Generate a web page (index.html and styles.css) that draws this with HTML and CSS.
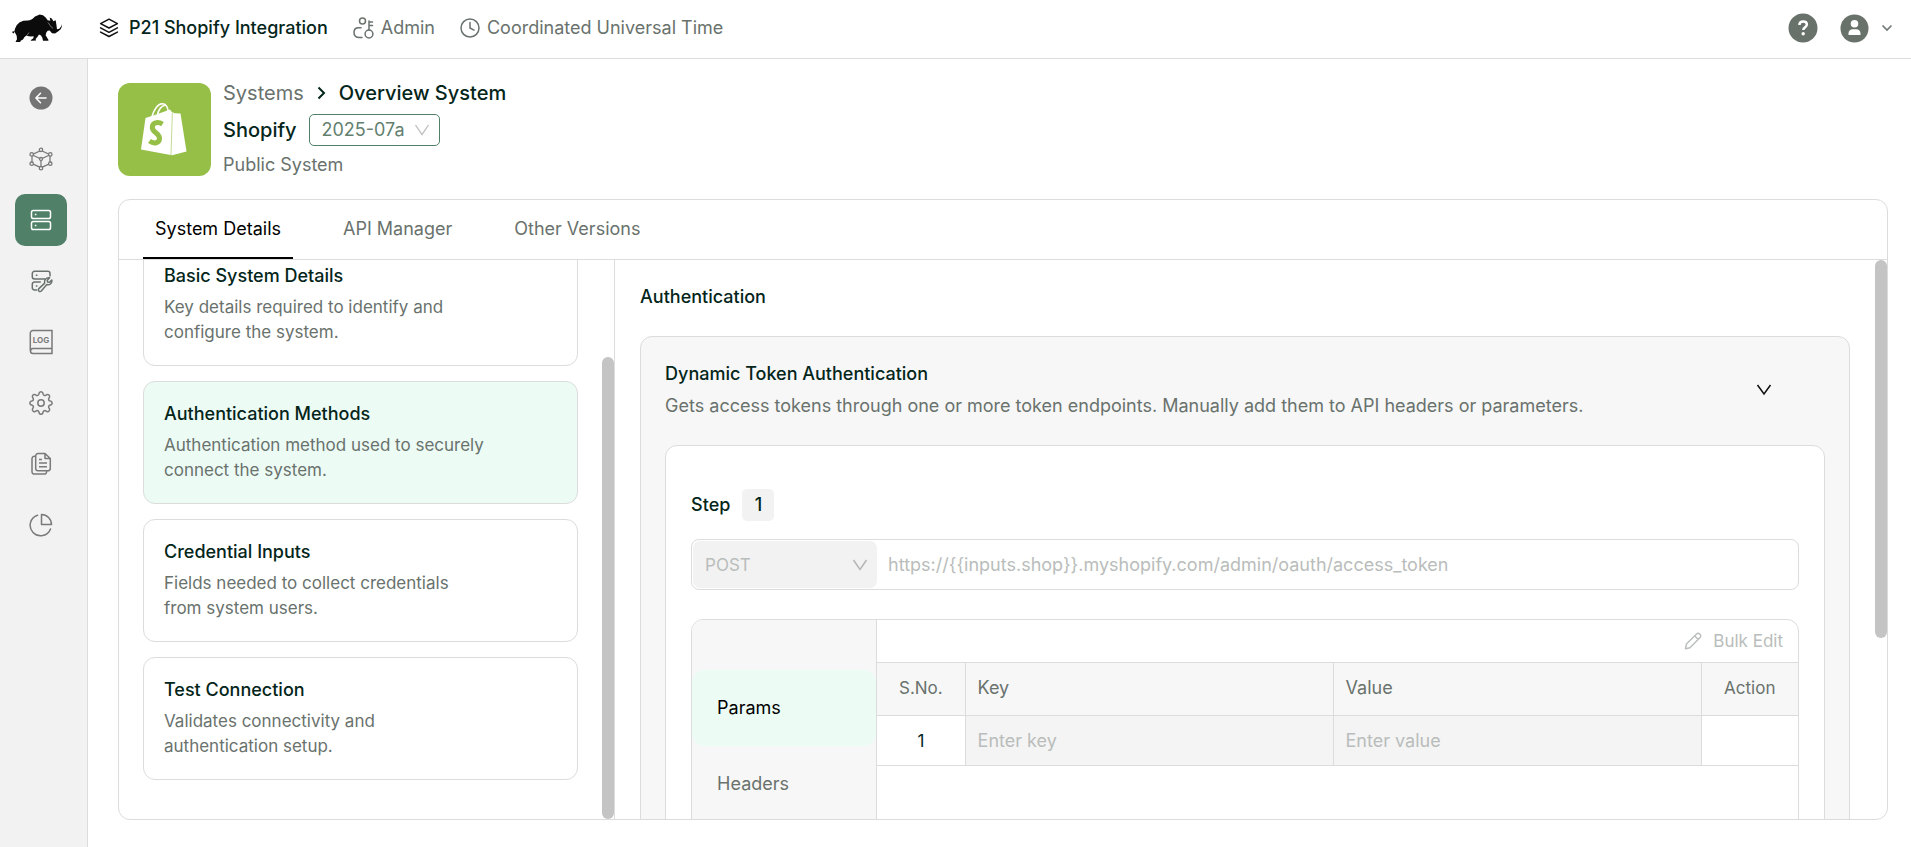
FILE: index.html
```html
<!DOCTYPE html>
<html lang="en">
<head>
<meta charset="utf-8">
<meta name="viewport" content="width=device-width, initial-scale=1">
<title>Overview System</title>
<link rel="stylesheet" href="styles.css">
</head>
<body class="app">
<header class="topbar">
  <a class="brand" href="#" aria-label="Home">
    <svg width="50" height="28" viewBox="37 43 150 83"><path fill="#0b0b0b" d="M39 94l5 1 2-8 5-11 8-8 12-5 14-1 12-4 9-8 9-4 5-2 10 2 8 7 6 8 8 2-2-10 7 4 4 7 7-3 2 12 2 15 7-1 7-9 1-6 2-2-2 9-4 9-8 7-9 6-9-1-7-8-6 1-4 5-2 8 4 7 5 8-2 2h-15l-2-9-4-7-6-3-6 9-4 4 1 5-14 1-2-2 8-6 1-6-9 1-14-2-5 4-4 7-7 4-2 5H49l-1-3 4-7-1-10-4-8-2-4-3 5-4-2z"/><path d="M78 112l10-14M104 50l-16 12M145 68l10 14 5 3" stroke="#fff" stroke-width="1.3" fill="none"/></svg>
  </a>
  <div class="context">
    <span class="ctx ctx-main">
      <svg width="20" height="20" viewBox="0 0 20 20" fill="none" stroke="#111" stroke-width="1.5" stroke-linejoin="round" stroke-linecap="round"><path d="M10 1.2L18.4 5.6 10 10 1.6 5.6zM1.6 9.9L10 14.3l8.4-4.4M1.6 14.1L10 18.5l8.4-4.4"/></svg>
      P21 Shopify Integration</span>
    <span class="ctx">
      <svg width="21" height="22" viewBox="0 0 21 22" fill="none" stroke="#69726d" stroke-width="1.5" stroke-linecap="round"><circle cx="9.5" cy="4" r="3"/><path d="M8 10.7H5.6C2.8 10.7 1 12.700 1 15.400c0 3 2 5 5.500 5.200H9M16 13V4M16 5h3.500M16 8.600h3.500"/><circle cx="16" cy="17" r="3.900"/></svg>
      Admin</span>
    <span class="ctx">
      <svg width="20" height="20" viewBox="0 0 20 20" fill="none" stroke="#69726d" stroke-width="1.5" stroke-linecap="round"><circle cx="10" cy="10" r="9"/><path d="M10 4.500V10l4 2.200"/></svg>
      Coordinated Universal Time</span>
  </div>
  <div class="account">
    <button class="icon-btn" aria-label="Help"><svg width="30" height="30" viewBox="0 0 30 30"><circle cx="15" cy="15" r="14.500" fill="#69726a"/><path d="M11.400 12c0-2.200 1.600-3.500 3.800-3.500s3.700 1.200 3.700 3.100c0 2.600-3.600 2.700-3.600 5.400" fill="none" stroke="#fff" stroke-width="2.500"/><circle cx="15.200" cy="20.700" r="1.700" fill="#fff"/></svg></button>
    <button class="icon-btn user" aria-label="Account"><svg width="29" height="29" viewBox="0 0 29 29"><circle cx="14.500" cy="14.500" r="14" fill="#69726a"/><circle cx="14.500" cy="9.800" r="3.800" fill="#fff"/><path d="M8.500 21v-1.500c0-2.500 1.700-4.300 4.200-4.300h3.600c2.500 0 4.200 1.800 4.200 4.300V21z" fill="#fff"/></svg><svg width="12" height="8" viewBox="0 0 12 8"><path d="M1.500 1.500L6 6l4.500-4.500" fill="none" stroke="#737b76" stroke-width="1.700"/></svg></button>
  </div>
</header>

<div class="shell">
  <nav class="rail" aria-label="Main">
    <a class="rail-link" href="#" aria-label="Back"><svg width="24" height="24" viewBox="0 0 24 24"><circle cx="12" cy="12" r="11.500" fill="#747474"/><path d="M17 12H7.500M11.500 7.300L6.900 12l4.600 4.700" fill="none" stroke="#fff" stroke-width="1.500" stroke-linecap="round" stroke-linejoin="round"/></svg></a>
    <a class="rail-link" href="#" aria-label="Integrations"><svg width="24" height="24" viewBox="0 0 24 24" fill="none" stroke="#7a7a7a" stroke-width="1.300"><path d="M12 3.500l9 4.100v9L12 20.700l-9-4.100v-9zM3.500 8l8.500 4 8.500-4M12 12v8"/><g fill="#f2f2f2"><circle cx="12" cy="2.800" r="1.700"/><circle cx="2.700" cy="7.400" r="1.700"/><circle cx="21.300" cy="7.400" r="1.700"/><circle cx="2.700" cy="16.700" r="1.700"/><circle cx="21.300" cy="16.700" r="1.700"/><circle cx="12" cy="21.200" r="1.700"/><circle cx="12" cy="12" r="1.500"/></g></svg></a>
    <a class="rail-link active" href="#" aria-label="Systems"><svg width="22" height="22" viewBox="0 0 22 22" fill="none" stroke="#fff" stroke-width="1.500"><rect x="1.500" y="1.500" width="19" height="8" rx="1.800"/><rect x="1.500" y="12.500" width="19" height="8" rx="1.800"/><path d="M4.800 5.500h1.600M4.800 16.500h1.600"/></svg></a>
    <a class="rail-link" href="#" aria-label="System tools"><svg width="24" height="24" viewBox="0 0 24 24" fill="none" stroke="#69726d" stroke-width="1.500" stroke-linejoin="round"><path d="M16 10H5.500A2.200 2.200 0 0 1 3.300 7.800V4.500A2.200 2.200 0 0 1 5.500 2.300h13.300A2.200 2.200 0 0 1 21 4.500v3M11.800 13H5.500a2.200 2.200 0 0 0-2.200 2.200v3.500A2.200 2.200 0 0 0 5.500 21H8M6.800 6.200h1.600M6.800 17h1.600"/><path d="M20.500 8.800l-2.300 2.600.4 1.700 1.800.2 2.400-2.300c.5 3-1.900 5.300-5 4.600L12.300 22c-1.900 1.600-3.900-.6-2.400-2.400l5.800-5.500c-.8-3.300 1.800-6 4.800-5.300z"/></svg></a>
    <a class="rail-link" href="#" aria-label="Logs"><svg width="24" height="26" viewBox="0 0 24 26" fill="none" stroke="#7a7a7a" stroke-width="1.500"><path d="M23 19.500H4a2.500 2.500 0 0 0 0 5h19zM23 19.500v-18H4A2.600 2.600 0 0 0 1.300 4v18"/><text x="12" y="13.500" class="log-text">LOG</text></svg></a>
    <a class="rail-link" href="#" aria-label="Settings"><svg width="24" height="24" viewBox="0 0 24 24" fill="none" stroke="#7a7a7a" stroke-width="1.500" stroke-linejoin="round"><circle cx="12" cy="12" r="3.200"/><path d="M10.200 1.900a2 2 0 0 1 3.600 0l.4 1.400c.4 1.100 1.600 1.500 2.500 1l1.200-.7a2 2 0 0 1 2.600 2.600l-.7 1.200c-.5.900 0 2.200 1 2.500l1.300.4a2 2 0 0 1 0 3.500l-1.300.4c-1 .3-1.500 1.500-1 2.500l.7 1.200a2 2 0 0 1-2.600 2.600l-1.200-.7c-.9-.5-2.100-.1-2.500 1l-.4 1.300a2 2 0 0 1-3.600 0l-.4-1.300c-.4-1.100-1.600-1.500-2.500-1l-1.200.7a2 2 0 0 1-2.600-2.600l.7-1.200c.5-1 0-2.200-1-2.500l-1.300-.4a2 2 0 0 1 0-3.500l1.300-.4c1-.3 1.500-1.600 1-2.500l-.7-1.200a2 2 0 0 1 2.600-2.600l1.200.7c.9.500 2.100.1 2.500-1z"/></svg></a>
    <a class="rail-link" href="#" aria-label="Documents"><svg width="24" height="24" viewBox="0 0 24 24" fill="none" stroke="#7a7a7a" stroke-width="1.500" stroke-linejoin="round"><path d="M16 1.500H9A2.300 2.300 0 0 0 6.700 3.800v12.700a2.300 2.300 0 0 0 2.300 2.300h10a2.300 2.300 0 0 0 2.300-2.300v-10zM16 1.500v5h5.300M6.700 4.300H5.300A2.300 2.300 0 0 0 3 6.600v13.200a2.300 2.300 0 0 0 2.300 2.300h10a2.300 2.300 0 0 0 2.300-2.300v-1M10 7.500h3M10 11h8M10 14.700h8"/></svg></a>
    <a class="rail-link" href="#" aria-label="Reports"><svg width="24" height="24" viewBox="0 0 24 24" fill="none" stroke="#7a7a7a" stroke-width="1.500" stroke-linejoin="round" stroke-linecap="round"><path d="M12.500 1.500v10h10c0-5.500-4.500-10-10-10z"/><path d="M8.500 2.300A10.500 10.500 0 1 0 21.500 16"/></svg></a>
  </nav>

  <main class="page">
    <section class="system-head">
      <svg class="system-logo" width="93" height="93" viewBox="0 0 93 93"><rect width="93" height="93" rx="12" fill="#96bf48"/><path d="M27.500 35l10-3.200 14.500-5.300 2 2.800 3 1 5.500.2 6 38-14.500 3.800L23 66.500z" fill="#fff"/><path d="M34 33.500C36 26 40 21 44 20.800s6 4 6.500 9M39.500 31.500c1-5 4.500-9.500 7.500-9" fill="none" stroke="#fff" stroke-width="1.600"/><path d="M54.300 30L53 72" stroke="#b4d27c" stroke-width=".8"/><path d="M44.500 41.200c-5-3.200-10.200-1.200-10.200 3.300 0 5 7.200 5.500 7.200 10.800 0 5-5.500 6-10 2.700" fill="none" stroke="#96bf48" stroke-width="5"/></svg>
      <div class="system-info">
        <nav class="crumbs" aria-label="Breadcrumb"><a href="#">Systems</a><svg width="9" height="14" viewBox="0 0 9 14"><path d="M1.500 1.500L7 7l-5.500 5.500" fill="none" stroke="#04251a" stroke-width="2"/></svg><h1>Overview System</h1></nav>
        <div class="name-row"><label for="version">Shopify</label>
          <span class="select version"><select id="version"><option>2025-07a</option></select><svg width="16" height="12" viewBox="0 0 16 12"><path d="M1.500 1L8 10.500 14.500 1" fill="none" stroke="#bcbcbc" stroke-width="1.300"/></svg></span></div>
        <p class="kind">Public System</p>
      </div>
    </section>

    <section class="panel">
      <div class="tabs" role="tablist">
        <button class="tab selected" role="tab" aria-selected="true">System Details</button>
        <button class="tab" role="tab">API Manager</button>
        <button class="tab" role="tab">Other Versions</button>
      </div>
      <div class="panes">
        <div class="pane steps-pane">
          <div class="cards">
            <a class="card" href="#"><h2>Basic System Details</h2><p>Key details required to identify and configure the system.</p></a>
            <a class="card current" href="#"><h2>Authentication Methods</h2><p>Authentication method used to securely connect the system.</p></a>
            <a class="card" href="#"><h2>Credential Inputs</h2><p>Fields needed to collect credentials from system users.</p></a>
            <a class="card" href="#"><h2>Test Connection</h2><p>Validates connectivity and authentication setup.</p></a>
          </div>
          <div class="track track-end"><div class="thumb" style="height:82.6%"></div></div>
        </div>
        <div class="pane detail-pane">
          <div class="detail">
            <h2 class="detail-title">Authentication</h2>
            <div class="method">
              <div class="method-head">
                <div><h3>Dynamic Token Authentication</h3><p>Gets access tokens through one or more token endpoints. Manually add them to API headers or parameters.</p></div>
                <button class="icon-btn" aria-label="Collapse"><svg width="16" height="12" viewBox="0 0 16 12"><path d="M1.500 1L8 10 14.500 1" fill="none" stroke="#111" stroke-width="1.500"/></svg></button>
              </div>
              <div class="step">
                <div class="step-title">Step <span class="badge">1</span></div>
                <div class="endpoint">
                  <span class="select verb"><select aria-label="Method" disabled><option>POST</option></select><svg width="16" height="12" viewBox="0 0 16 12"><path d="M1.500 1L8 10.500 14.500 1" fill="none" stroke="#b5b5b5" stroke-width="1.500"/></svg></span>
                  <input class="url" aria-label="URL" disabled value="https://{{inputs.shop}}.myshopify.com/admin/oauth/access_token">
                </div>
                <div class="request">
                  <div class="side-tabs" role="tablist">
                    <button class="side-tab selected" role="tab" aria-selected="true">Params</button>
                    <button class="side-tab" role="tab">Headers</button>
                  </div>
                  <div class="grid-area">
                    <div class="toolbar"><button class="bulk" disabled><svg width="18" height="18" viewBox="0 0 18 18" fill="none" stroke="#b9bdbb" stroke-width="1.400" stroke-linejoin="round"><path d="M1.500 16.700l.9-4.600L12.600 1.900a2.100 2.100 0 0 1 3 0l.5.500a2.100 2.100 0 0 1 0 3L5.900 15.700zM10.700 3.900l3.400 3.400"/></svg>Bulk Edit</button></div>
                    <table>
                      <colgroup><col class="c-no"><col><col><col class="c-act"></colgroup>
                      <thead><tr><th class="mid">S.No.</th><th>Key</th><th>Value</th><th class="mid">Action</th></tr></thead>
                      <tbody><tr><td class="mid">1</td><td class="field"><input aria-label="Key" placeholder="Enter key" disabled></td><td class="field"><input aria-label="Value" placeholder="Enter value" disabled></td><td></td></tr></tbody>
                    </table>
                  </div>
                </div>
              </div>
            </div>
          </div>
          <div class="track"><div class="thumb" style="height:67.6%"></div></div>
        </div>
      </div>
    </section>
  </main>
</div>
</body>
</html>
```

FILE: styles.css
```css
:root {
  --ink: #04251a;
  --muted: #69726d;
  --faint: #b9bdbb;
  --line: #dcdcdc;
  --mint: #edfbf5;
  --green: #518068;
}
* { box-sizing: border-box; }
h1, h2, h3, p { margin: 0; font-weight: 400; font-size: inherit; }
button, input, select { font: inherit; color: inherit; border: 0; background: none; padding: 0; margin: 0; }
a { color: inherit; text-decoration: none; }
svg { display: block; flex: none; }

.app {
  margin: 0;
  height: 100vh;
  display: flex;
  flex-direction: column;
  overflow: hidden;
  background: #fff;
  color: var(--ink);
  font: 18px/26px Inter, "Open Sans", sans-serif;
}

.topbar {
  display: flex;
  align-items: center;
  flex: none;
  height: 59px;
  padding: 0 18px 2px 12px;
  border-bottom: 1px solid var(--line);
}
.brand { width: 87px; }
.context { display: flex; gap: 25px; color: var(--muted); }
.ctx { display: flex; align-items: center; gap: 7px; }
.ctx-main { gap: 10px; font-weight: 500; color: var(--ink); }
.account { display: flex; align-items: center; gap: 22px; margin-left: auto; }
.icon-btn { display: flex; align-items: center; gap: 12px; }

.shell { display: flex; flex: 1; min-height: 0; }
.rail {
  flex: none;
  width: 88px;
  display: flex;
  flex-direction: column;
  gap: 9px;
  padding: 13px 20px 0 15px;
  background: #f2f2f2;
  border-right: 1px solid var(--line);
}
.rail-link { width: 52px; height: 52px; display: grid; place-items: center; border-radius: 10px; }
.rail-link.active { background: var(--green); }
.log-text { font: 700 8px Inter, sans-serif; text-anchor: middle; fill: #7a7a7a; stroke: none; }

.page { flex: 1; min-width: 0; display: flex; flex-direction: column; padding: 21px 23px 27px 30px; }
.system-head { display: flex; align-items: center; gap: 12px; margin-bottom: 21px; }
.crumbs { display: flex; align-items: center; gap: 13px; font-size: 20px; font-weight: 500; }
.crumbs a { color: var(--muted); font-weight: 400; }
.crumbs h1 { font-weight: 500; }
.name-row { display: flex; align-items: center; gap: 12px; margin: 8px 0 6px; font-size: 20px; font-weight: 500; }
.kind { color: var(--muted); }

.select { position: relative; display: flex; align-items: center; }
.select select { appearance: none; width: 100%; height: 100%; opacity: 1; }
.select svg { position: absolute; right: 9px; pointer-events: none; }
.version { width: 131px; height: 32px; border: 1px solid var(--green); border-radius: 5px; font-size: 18px; font-weight: 400; color: #63806f; }
.version select { padding-left: 12px; }

.panel {
  flex: 1;
  min-height: 0;
  display: flex;
  flex-direction: column;
  border: 1px solid var(--line);
  border-radius: 12px;
  overflow: hidden;
}
.tabs { display: flex; gap: 38px; flex: none; height: 60px; padding-left: 24px; border-bottom: 1px solid var(--line); }
.tab { padding: 0 12px; color: var(--muted); border-bottom: 2px solid transparent; }
.tab.selected { color: #000; border-color: #000; }

.panes { flex: 1; min-height: 0; display: grid; grid-template-columns: 28.06% minmax(0, 1fr); }
.pane { display: flex; min-height: 0; overflow: hidden; }
.steps-pane { border-right: 1px solid var(--line); }
.track { flex: none; width: 12px; display: flex; flex-direction: column; }
.track-end { justify-content: flex-end; }
.thumb { background: #c4c4c4; border-radius: 6px; }

.cards { flex: 1; display: flex; flex-direction: column; justify-content: flex-end; gap: 15px; padding: 0 24px 39px; }
.card { flex: none; padding: 19px 20px 20px; border: 1px solid var(--line); border-radius: 12px; }
.card.current { background: var(--mint); }
.card h2 { margin-bottom: 6px; font-weight: 500; }
.card p { max-width: 323px; font-size: 17px; line-height: 25px; color: var(--muted); }

.detail { flex: 1; min-width: 0; padding: 24px 25px; }
.detail-title { font-weight: 500; margin-bottom: 26px; }
.method { padding: 24px; border: 1px solid var(--line); border-radius: 12px; background: #f7f7f7; }
.method-head { display: flex; align-items: center; justify-content: space-between; padding-right: 53px; }
.method-head h3 { margin-bottom: 6px; font-weight: 500; }
.method-head p { color: var(--muted); }
.step { margin-top: 26px; padding: 43px 25px 60px; border: 1px solid var(--line); border-radius: 12px; background: #fff; }
.step-title { display: flex; align-items: center; gap: 12px; font-weight: 500; }
.badge { width: 32px; height: 32px; display: grid; place-items: center; border-radius: 5px; background: #f2f2f2; }

.endpoint { display: flex; height: 51px; margin: 18px 0 29px; padding: 1px; border: 1px solid var(--line); border-radius: 8px; color: var(--faint); }
.verb { flex: none; width: 184px; border-radius: 7px; background: #f2f2f2; font-size: 17px; }
.verb select { padding-left: 12px; }
.url { flex: 1; padding-left: 11px; }

.request { display: flex; min-height: 270px; border: 1px solid var(--line); border-radius: 12px; overflow: hidden; }
.side-tabs { flex: none; width: 185px; padding-top: 50px; display: flex; flex-direction: column; background: #f7f7f7; border-right: 1px solid var(--line); }
.side-tab { height: 76px; padding-left: 25px; text-align: left; color: var(--muted); border-radius: 12px; }
.side-tab.selected { background: var(--mint); color: #000; }
.grid-area { flex: 1; }
.toolbar { display: flex; justify-content: flex-end; height: 42px; padding-right: 15px; font-size: 17px; color: var(--faint); }
.bulk { display: flex; align-items: center; gap: 11px; }

table { width: 100%; table-layout: fixed; border-collapse: collapse; }
.c-no { width: 88px; }
.c-act { width: 97px; }
th { height: 53px; padding: 0 12px 2px; text-align: left; font-weight: 400; color: var(--muted); background: #f7f7f7; }
td { height: 50px; padding: 0; }
th, td { border: 1px solid var(--line); }
th:first-child, td:first-child { border-left: 0; }
th:last-child, td:last-child { border-right: 0; }
.mid { text-align: center; font-size: 17px; }
.field { background: #f4f4f4; }
.field input { width: 100%; padding-left: 12px; }
.field input::placeholder { color: var(--faint); }
```
